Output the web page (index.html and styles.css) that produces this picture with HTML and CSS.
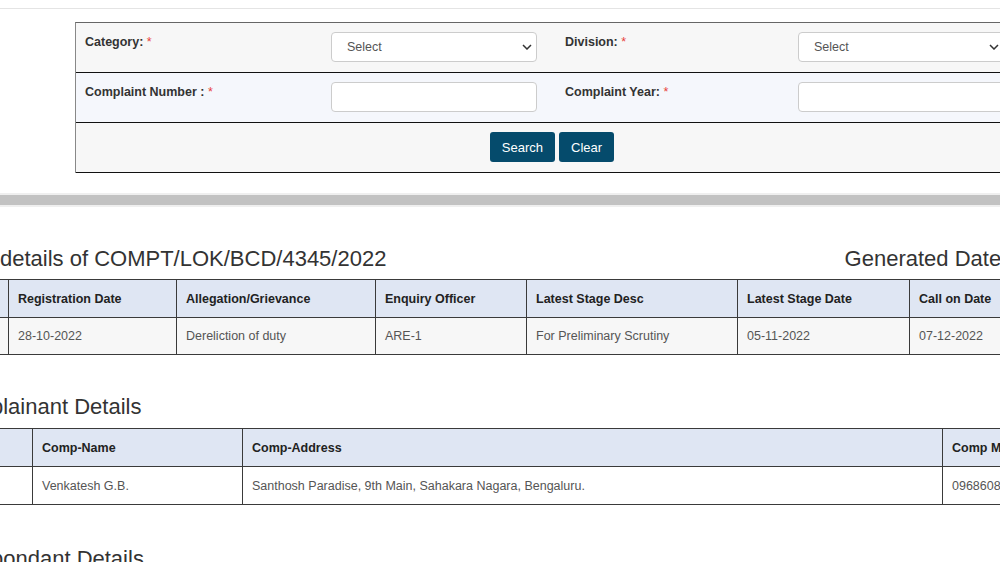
FILE: index.html
```html
<!DOCTYPE html>
<html lang="en">
<head>
    <meta charset="UTF-8">
    <meta name="viewport" content="width=device-width, initial-scale=1.0">
    <title>Complaint Status</title>
    <link rel="stylesheet" href="styles.css">
</head>
<body>
    <div class="top-rule"></div>

    <div class="search-box">
        <div class="search-row">
            <div class="cell first"><span class="label">Category: <span class="req">*</span></span></div>
            <div class="cell">
                <div class="select-wrap">
                    <select><option>Select</option></select>
                    <svg class="chev" width="10" height="6" viewBox="0 0 10 6"><polyline points="1,1 5,5 9,1" fill="none" stroke="#333" stroke-width="1.5"/></svg>
                </div>
            </div>
            <div class="cell"><span class="label">Division: <span class="req">*</span></span></div>
            <div class="cell">
                <div class="select-wrap">
                    <select><option>Select</option></select>
                    <svg class="chev" width="10" height="6" viewBox="0 0 10 6"><polyline points="1,1 5,5 9,1" fill="none" stroke="#333" stroke-width="1.5"/></svg>
                </div>
            </div>
        </div>
        <div class="search-row alt">
            <div class="cell first"><span class="label">Complaint Number : <span class="req">*</span></span></div>
            <div class="cell"><input type="text"></div>
            <div class="cell"><span class="label">Complaint Year: <span class="req">*</span></span></div>
            <div class="cell"><input type="text"></div>
        </div>
        <div class="search-row buttons">
            <button>Search</button>
            <button>Clear</button>
        </div>
    </div>

    <div class="divider"></div>

    <div class="title-row">
        <h3>details of COMPT/LOK/BCD/4345/2022</h3>
        <h3>Generated Date : 07-12-2022</h3>
    </div>
    <table class="grid case-table">
        <colgroup>
            <col style="width:68px"><col style="width:168px"><col style="width:199px"><col style="width:151px">
            <col style="width:211px"><col style="width:172px"><col style="width:140px">
        </colgroup>
        <tr>
            <th>Sl.No</th><th>Registration Date</th><th>Allegation/Grievance</th><th>Enquiry Officer</th>
            <th>Latest Stage Desc</th><th>Latest Stage Date</th><th>Call on Date</th>
        </tr>
        <tr class="shade">
            <td>1</td><td>28-10-2022</td><td>Dereliction of duty</td><td>ARE-1</td>
            <td>For Preliminary Scrutiny</td><td>05-11-2022</td><td>07-12-2022</td>
        </tr>
    </table>

    <h3 class="cut">plainant Details</h3>
    <table class="grid party-table">
        <colgroup>
            <col style="width:92px"><col style="width:210px"><col style="width:700px"><col style="width:160px">
        </colgroup>
        <tr>
            <th>Sl.No</th><th>Comp-Name</th><th>Comp-Address</th><th>Comp Mobile</th>
        </tr>
        <tr>
            <td>1</td><td>Venkatesh G.B.</td><td>Santhosh Paradise, 9th Main, Sahakara Nagara, Bengaluru.</td><td>09686080000</td>
        </tr>
    </table>

    <h3 class="cut last">pondant Details</h3>
</body>
</html>
```

FILE: styles.css
```css
body {
    margin: 0;
    font-family: "Liberation Sans", Arial, sans-serif;
    background-color: #fff;
    color: #333;
    overflow: hidden;
    height: 562px;
}
.top-rule {
    margin-top: 8px;
    height: 1px;
    background-color: #e4e4e4;
}
.search-box {
    margin: 13px 0 0 75px;
    width: 952px;
    border-top: 1px solid #666;
    border-left: 1px solid #888;
}
.search-row {
    display: grid;
    grid-template-columns: 245px 234px 233px 1fr;
    height: 49px;
    border-bottom: 1px solid #111;
    background-color: #f7f7f7;
}
.search-row.alt {
    background-color: #f5f7fc;
}
.search-row.buttons {
    display: flex;
    justify-content: center;
    gap: 4px;
    padding-top: 9px;
    height: 40px;
}
.cell {
    padding: 9px 0 0 10px;
}
.cell.first {
    padding-left: 9px;
}
.label {
    display: inline-block;
    margin-top: 2px;
    font-size: 12.5px;
    font-weight: bold;
    color: #333;
}
.req {
    color: #e8413b;
    font-weight: normal;
}
.select-wrap {
    position: relative;
    width: 206px;
}
select, input[type="text"] {
    display: block;
    width: 206px;
    height: 30px;
    box-sizing: border-box;
    border: 1px solid #ccc;
    border-radius: 4px;
    background-color: #fff;
    font-family: inherit;
    font-size: 12.5px;
    color: #555;
}
select {
    appearance: none;
    -webkit-appearance: none;
    padding-left: 15px;
}
.chev {
    position: absolute;
    right: 5px;
    top: 12px;
}
button {
    height: 30px;
    padding: 0 12px;
    border: none;
    border-radius: 3px;
    background-color: #054b6c;
    color: #fff;
    font-family: inherit;
    font-size: 13px;
    cursor: pointer;
}
.divider {
    margin-top: 20px;
    height: 10px;
    background-color: #c2c2c2;
    border-top: 2px solid #efefef;
    border-bottom: 2px solid #efefef;
}
h3 {
    margin: 0;
    font-size: 22px;
    font-weight: normal;
    line-height: 26px;
    color: #333;
    white-space: nowrap;
}
.title-row {
    display: flex;
    justify-content: space-between;
    width: 1132px;
    margin-top: 39px;
}
.cut {
    margin: 39px 0 0 -9px;
}
.cut.last {
    margin-top: 41px;
}
.grid {
    border-collapse: collapse;
    table-layout: fixed;
    margin-top: 8px;
    margin-left: -60px;
    font-size: 12.5px;
}
.case-table {
    width: 1109px;
    margin-top: 7px;
}
.party-table {
    width: 1162px;
}
.grid th, .grid td {
    border: 1px solid #3a3a3a;
    padding: 0 9px;
    text-align: left;
    white-space: nowrap;
    overflow: hidden;
}
.grid th {
    height: 37px;
    background-color: #dfe6f3;
    color: #222;
    font-size: 12.5px;
}
.grid td {
    height: 36px;
    color: #555;
}
.grid tr.shade td {
    background-color: #f7f7f7;
}
.party-table td {
    height: 37px;
}
```
